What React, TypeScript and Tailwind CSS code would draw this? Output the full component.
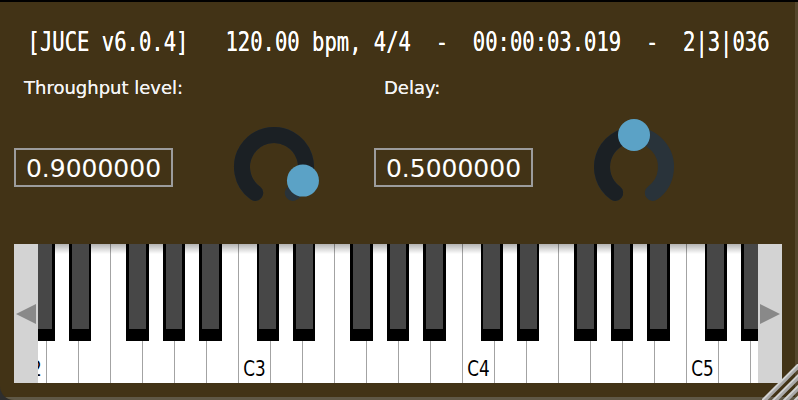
import React from "react";

const KEY_W = 32;
const WHITE_COUNT = 24;
// JUCE-style black key offsets inside an octave, in white-key units
const BLACK_POS = [0.58, 1.72, 3.51, 4.65, 5.79];

function polar(cx: number, cy: number, r: number, deg: number) {
    const a = (deg * Math.PI) / 180;
    return { x: cx + r * Math.sin(a), y: cy - r * Math.cos(a) };
}

function arc(cx: number, cy: number, r: number, from: number, to: number) {
    const s = polar(cx, cy, r, from);
    const e = polar(cx, cy, r, to);
    const large = to - from > 180 ? 1 : 0;
    return `M ${s.x} ${s.y} A ${r} ${r} 0 ${large} 1 ${e.x} ${e.y}`;
}

function Knob({ value }: { value: number }) {
    const start = 216;
    const end = 504;
    const angle = start + value * (end - start);
    const thumb = polar(48, 48, 32, angle);

    return (
        <svg width="96" height="96" viewBox="0 0 96 96" className="shrink-0">
            <path d={arc(48, 48, 32, start, end)} fill="none" stroke="#29333a" strokeWidth="16" strokeLinecap="round" />
            <path d={arc(48, 48, 32, start, angle)} fill="none" stroke="#1b2024" strokeWidth="16" strokeLinecap="round" />
            <circle cx={thumb.x} cy={thumb.y} r="16" fill="#5ba2c6" />
        </svg>
    );
}

function Control({ label, value }: { label: string; value: number }) {
    return (
        <div className="w-[360px] flex flex-col">
            <div className="pl-[10px] h-[20px] leading-[20px] text-[18px] text-[#f4f4f4] font-['DejaVu_Sans',sans-serif] [text-shadow:0_0_0.4px_#f4f4f4]">
                {label}
            </div>
            <div className="mt-[21px] flex items-center">
                <div className="w-[159px] h-[39px] border-2 border-[#9c9c9c] flex items-center justify-center pt-[3px] text-white text-[25px] leading-[30px] font-['DejaVu_Sans',sans-serif]">
                    {value.toFixed(7)}
                </div>
                <div className="ml-[53px]">
                    <Knob value={value} />
                </div>
            </div>
        </div>
    );
}

function ScrollButton({ dir }: { dir: "left" | "right" }) {
    return (
        <div
            className={`absolute top-0 h-full w-[24px] bg-[#d3d3d3] flex items-center justify-center ${
                dir === "left" ? "left-0" : "right-0"
            }`}
        >
            <svg width="20" height="20" viewBox="0 0 20 20">
                {dir === "left" ? (
                    <polygon points="0,10 20,0 20,20" fill="#898989" />
                ) : (
                    <polygon points="20,10 0,0 0,20" fill="#898989" />
                )}
            </svg>
        </div>
    );
}

function Keyboard() {
    const whites = Array.from({ length: WHITE_COUNT }, (_, i) => i);
    const blacks: number[] = [];
    for (let oct = 0; oct < 4; oct++) {
        for (const p of BLACK_POS) {
            const x = (oct * 7 + p) * KEY_W;
            if (x < WHITE_COUNT * KEY_W) blacks.push(x);
        }
    }

    return (
        <div className="relative w-[768px] h-[139px] overflow-hidden bg-white">
            <div className="flex h-full">
                {whites.map((i) => (
                    <div key={i} className="relative w-[32px] h-full shrink-0 border-l border-[#a3a3a3] bg-white">
                        {i % 7 === 0 && (
                            <span className="absolute inset-x-0 bottom-[3px] scale-x-80 text-center whitespace-nowrap text-[21px] leading-[21px] text-black font-['DejaVu_Sans',sans-serif]">
                                C{2 + i / 7}
                            </span>
                        )}
                    </div>
                ))}
            </div>

            {/* top shadow */}
            <div className="absolute inset-x-0 top-0 h-[10px] bg-linear-to-b from-black/30 to-transparent" />

            {blacks.map((x) => (
                <div key={x} className="absolute top-0 h-[97px] w-[22.4px] bg-black" style={{ left: x }}>
                    <div className="mx-[2.8px] h-[85px] bg-[#474747]" />
                </div>
            ))}

            <ScrollButton dir="left" />
            <ScrollButton dir="right" />
        </div>
    );
}

function CornerResizer() {
    const w = 36;
    const t = w * 0.075;
    const steps = [0, 0.3, 0.6, 0.9];
    return (
        <svg width={w} height={w} viewBox={`0 0 ${w} ${w}`} className="absolute right-0 bottom-0">
            {steps.map((i) => (
                <g key={i}>
                    <line x1={w * i} y1={w + 1} x2={w + 1} y2={w * i} stroke="#d3d3d3" strokeWidth={t} />
                    <line x1={w * i + t} y1={w + 1} x2={w + 1} y2={w * i + t} stroke="#a9a9a9" strokeWidth={t} />
                </g>
            ))}
        </svg>
    );
}

export default function App() {
    return (
        <div className="w-[798px] h-[400px] bg-[#2e2e2e]">
            <div className="relative w-full h-full overflow-hidden rounded-bl-[14px] bg-[#423316] border-t-2 border-black flex flex-col">
                <div className="pt-[25px] h-[55px] flex justify-center">
                    <span className="shrink-0 inline-block scale-x-[0.79] whitespace-pre text-white text-[26px] leading-[30px] font-['DejaVu_Sans_Mono',monospace] [text-shadow:0_0_0.4px_#ffffff]">
                        {"[JUCE v6.0.4]   120.00 bpm, 4/4  -  00:00:03.019  -  2|3|036"}
                    </span>
                </div>

                <div className="mt-[21px] ml-[14px] flex">
                    <Control label="Throughput level:" value={0.9} />
                    <Control label="Delay:" value={0.5} />
                </div>

                <div className="mt-[29px] ml-[14px]">
                    <Keyboard />
                </div>

                {/* window frame edges */}
                <div className="absolute right-0 top-0 h-full w-[3px] bg-[#54462c]" />
                <div className="absolute left-0 bottom-0 w-full h-[3px] bg-[#5f5846] rounded-bl-[14px]" />
                <CornerResizer />
            </div>
        </div>
    );
}
